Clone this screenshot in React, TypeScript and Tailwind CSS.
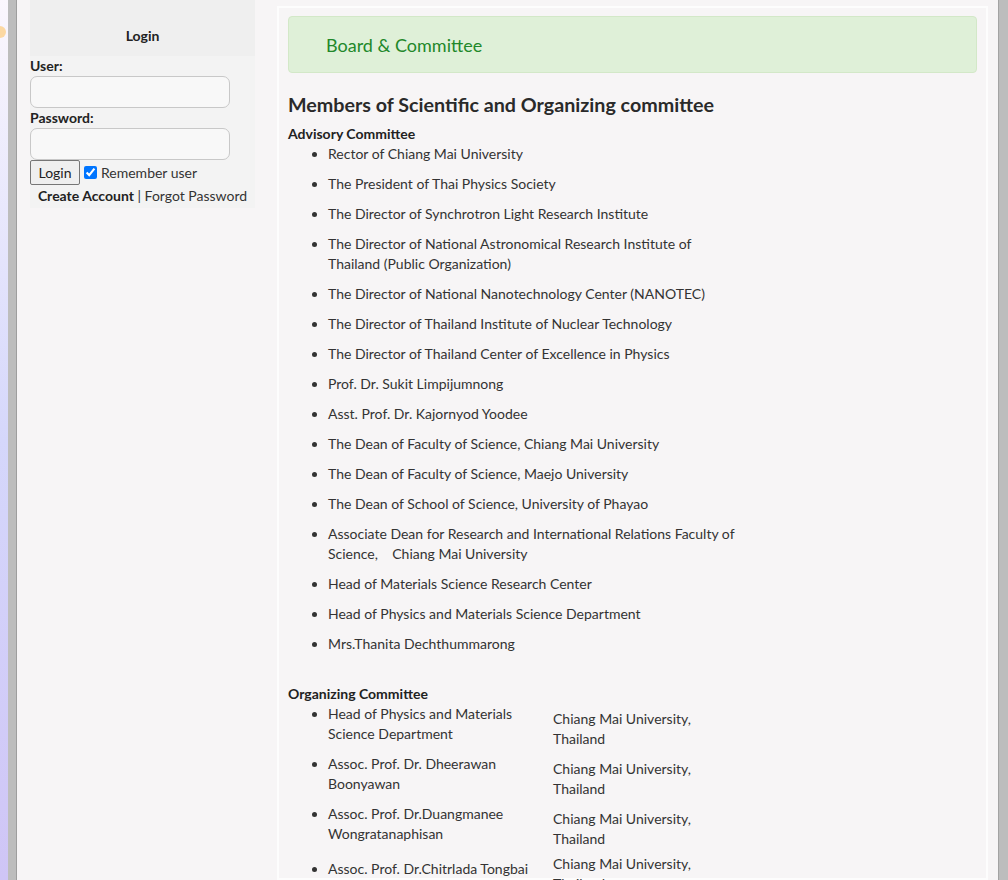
import React from "react";

const advisory = [
  "Rector of Chiang Mai University",
  "The President of Thai Physics Society",
  "The Director of Synchrotron Light Research Institute",
  "The Director of National Astronomical Research Institute of Thailand (Public Organization)",
  "The Director of National Nanotechnology Center (NANOTEC)",
  "The Director of Thailand Institute of Nuclear Technology",
  "The Director of Thailand Center of Excellence in Physics",
  "Prof. Dr. Sukit Limpijumnong",
  "Asst. Prof. Dr. Kajornyod Yoodee",
  "The Dean of Faculty of Science, Chiang Mai University",
  "The Dean of Faculty of Science, Maejo University",
  "The Dean of School of Science, University of Phayao",
  "Associate Dean for Research and International Relations Faculty of Science,\u00a0\u00a0\u00a0\u00a0Chiang Mai University",
  "Head of Materials Science Research Center",
  "Head of Physics and Materials Science Department",
  "Mrs.Thanita Dechthummarong",
];

const organizing = [
  { name: "Head of Physics and Materials Science Department", org: "Chiang Mai University, Thailand" },
  { name: "Assoc. Prof. Dr. Dheerawan Boonyawan", org: "Chiang Mai University, Thailand" },
  { name: "Assoc. Prof. Dr.Duangmanee Wongratanaphisan", org: "Chiang Mai University, Thailand" },
  { name: "Assoc. Prof. Dr.Chitrlada Tongbai", org: "Chiang Mai University, Thailand" },
];

function Sidebar() {
  return (
    <div className="w-[225px] shrink-0 self-start bg-[#f3f3f3] pb-[1px]">
      <div className="h-[56px] bg-[#efefef] flex items-end justify-center pb-[10px]">
        <span className="font-bold text-[#222]">Login</span>
      </div>
      <form className="flex flex-col">
        <label className="font-bold text-[#222] h-[20px]">User:</label>
        <input className="w-[200px] h-[32px] rounded-[7px] border border-[#c8c8c8] bg-[#f8f8f8] px-2 outline-none" />
        <label className="font-bold text-[#222] h-[20px]">Password:</label>
        <input type="password" className="w-[200px] h-[32px] rounded-[7px] border border-[#c8c8c8] bg-[#f8f8f8] px-2 outline-none" />
        <div className="flex items-center h-[25px]">
          <button type="button" className="h-[25px] w-[50px] border border-[#767676] bg-[#efefef] rounded-[2px] text-[#222]">Login</button>
          <input type="checkbox" defaultChecked className="w-[13px] h-[13px] ml-[4px] mr-[4px] accent-[#0075ff]" />
          <span className="text-[#333]">Remember user</span>
        </div>
      </form>
      <div className="text-center h-[21px] mt-[1px] text-[#333]">
        <span className="font-bold text-[#222]">Create Account</span> | <span>Forgot Password</span>
      </div>
    </div>
  );
}

function Content() {
  return (
    <div className="flex-1 mt-[6px] border-2 border-[#fdfdfd] px-[9px] pt-[8px] text-[#333]">
      <div className="h-[57px] rounded-[4px] border border-[#d3e8c8] bg-[#dff0d8] flex items-center pl-[37px]">
        <span className="text-[18px] text-[#22882a]">Board &amp; Committee</span>
      </div>
      <h2 className="mt-[20px] text-[19.7px] leading-[24px] font-bold text-[#2a2a2a]">
        Members of Scientific and Organizing committee
      </h2>
      <div className="mt-[7px] font-bold text-[#222]">Advisory Committee</div>
      <ul className="list-disc pl-10 w-[452px]">
        {advisory.map((a) => (
          <li key={a} className="mb-[10px]">{a}</li>
        ))}
      </ul>
      <div className="h-[20px]" />
      <div className="font-bold text-[#222]">Organizing Committee</div>
      <table className="w-[452px] border-collapse">
        <tbody>
          {organizing.map((o) => (
            <tr key={o.name}>
              <td className="w-[265px] align-middle p-0">
                <ul className="list-disc pl-10 pr-[8px]">
                  <li className="mb-[10px]">{o.name}</li>
                </ul>
              </td>
              <td className="align-middle p-0 pr-[10px]">{o.org}</td>
            </tr>
          ))}
        </tbody>
      </table>
    </div>
  );
}

export default function App() {
  return (
    <div
      className="flex h-screen overflow-hidden text-[14px] leading-[20px]"
      style={{ fontFamily: "Lato, 'Noto Sans', sans-serif" }}
    >
      <div className="w-[8px] shrink-0 relative bg-gradient-to-b from-[#fbf7fd] via-[#d5d7fb] to-[#cfc5f6]">
        <div className="absolute left-[-6px] top-[26px] w-[12px] h-[12px] rounded-full bg-[#fcd8a2]" />
      </div>
      <div className="w-[9px] shrink-0 bg-[#bdbdbd] border-r border-[#9e9e9e]" />
      <div className="flex-1 flex bg-[#f7f5f6] pl-[13px] pr-[10px]">
        <Sidebar />
        <div className="w-[22px] shrink-0" />
        <Content />
      </div>
      <div className="w-[10px] shrink-0 bg-[#bdbdbd] border-l border-[#a3a3a3]" />
    </div>
  );
}
